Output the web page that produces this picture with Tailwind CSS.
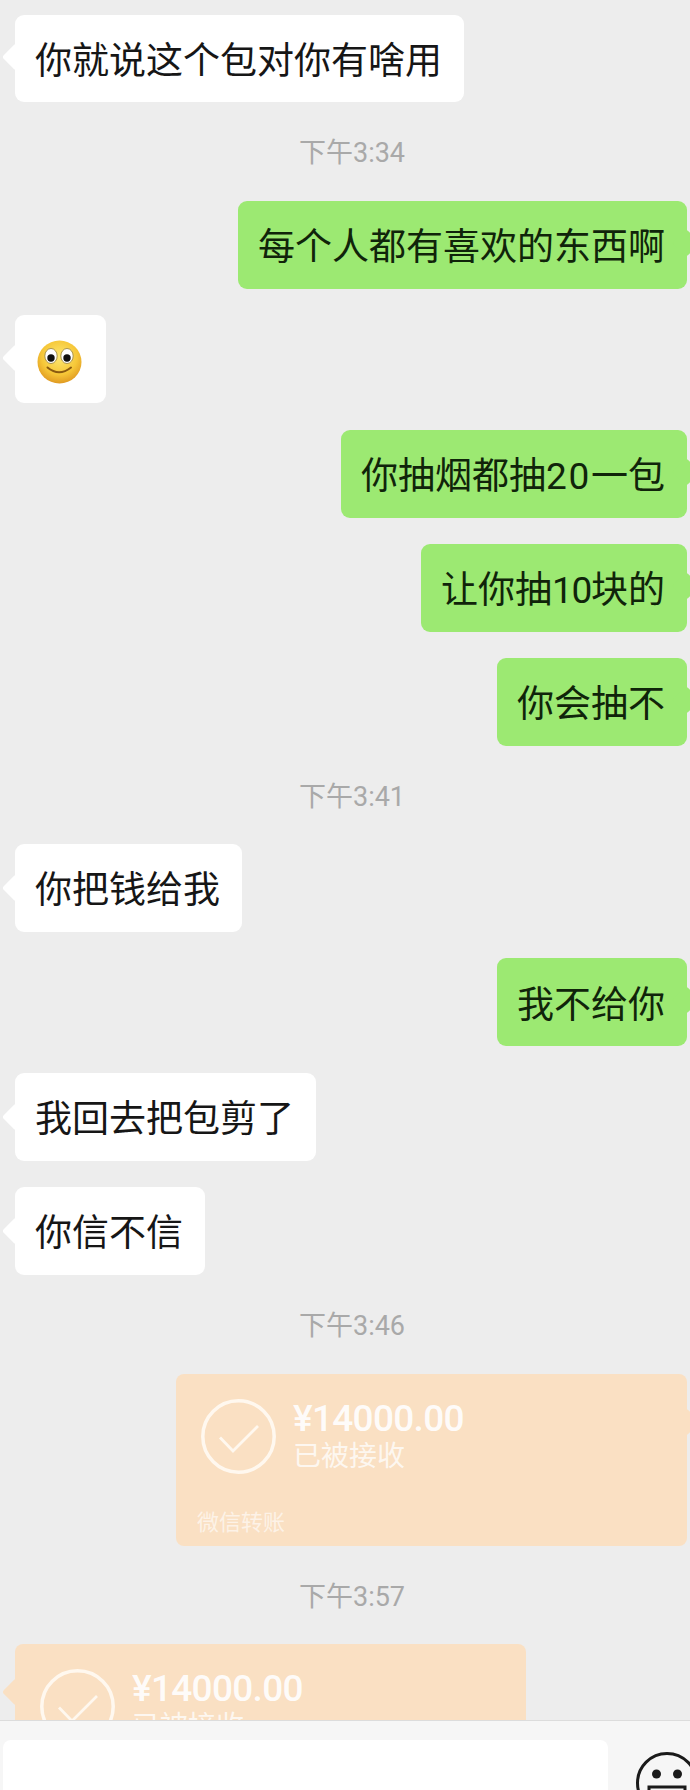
<!DOCTYPE html>
<html lang="zh-CN">
<head>
  <meta charset="UTF-8">
  <meta name="viewport" content="width=device-width, initial-scale=1">
  <title>聊天记录</title>
  <script src="https://cdn.jsdelivr.net/npm/@tailwindcss/browser@4"></script>
</head>
<body class="bg-[#ededed] w-[690px] h-[1790px] overflow-hidden font-[Roboto,'Noto_Sans_CJK_SC',sans-serif] text-[#161616]">

  <!-- 消息列表 -->
  <main class="h-[1720px] overflow-hidden pt-[15px] flex flex-col">
    <section class="flex flex-col gap-[26.3px]">
      <div class="relative self-start ml-[15px] h-[87px] pt-[6px] pl-[20px] pr-[22px] flex items-center bg-white rounded-[9px] text-[37px]">
        <span class="absolute -left-[9px] top-[32px] w-5 h-5 rotate-45 rounded-[3px] bg-white"></span>
        <span class="relative">你就说这个包对你有啥用</span>
      </div>
    </section>

    <div class="h-[99px] shrink-0 pl-[14px] pt-1 flex items-center justify-center text-[27px] text-[#a9a9a9]">下午3:34</div>

    <section class="flex flex-col gap-[26.3px]">
      <div class="relative self-end mr-[3px] h-[88px] pt-[6px] pl-[20px] pr-[22px] flex items-center bg-[#9ce972] rounded-[9px] text-[37px] text-[#10240a]">
        <span class="absolute -right-[9px] top-[32px] w-5 h-5 rotate-45 rounded-[3px] bg-[#9ce972]"></span>
        <span class="relative">每个人都有喜欢的东西啊</span>
      </div>

      <div class="relative self-start ml-[15px] h-[88px] w-[91px] flex items-center bg-white rounded-[9px]">
        <span class="absolute -left-[9px] top-[33px] w-5 h-5 rotate-45 rounded-[3px] bg-white"></span>
        <svg class="relative ml-[22px] mt-[5px]" width="45" height="44" viewBox="0 0 45 44">
          <defs>
            <radialGradient id="face" cx="50%" cy="38%" r="62%">
              <stop offset="0%" stop-color="#fde872"></stop>
              <stop offset="65%" stop-color="#f6c738"></stop>
              <stop offset="100%" stop-color="#e09a22"></stop>
            </radialGradient>
          </defs>
          <ellipse cx="22.5" cy="22" rx="22" ry="21.5" fill="url(#face)"></ellipse>
          <ellipse cx="14" cy="16" rx="6.2" ry="7.5" fill="#fff" stroke="#a8924a" stroke-width="1"></ellipse>
          <ellipse cx="30" cy="16" rx="6.2" ry="7.5" fill="#fff" stroke="#a8924a" stroke-width="1"></ellipse>
          <circle cx="14" cy="18" r="3.7" fill="#111"></circle>
          <circle cx="30" cy="18" r="3.7" fill="#111"></circle>
          <path d="M10.5 27.5 Q22 37 34 27.5" fill="none" stroke="#8a5a10" stroke-width="2" stroke-linecap="round"></path>
        </svg>
      </div>

      <div class="relative self-end mr-[3px] h-[88px] pt-[6px] pl-[20px] pr-[22px] flex items-center bg-[#9ce972] rounded-[9px] text-[37px] text-[#10240a]">
        <span class="absolute -right-[9px] top-[32px] w-5 h-5 rotate-45 rounded-[3px] bg-[#9ce972]"></span>
        <span class="relative">你抽烟都抽<span class="tracking-[1.7px]">20</span>一包</span>
      </div>

      <div class="relative self-end mr-[3px] h-[88px] pt-[6px] pl-[20px] pr-[22px] flex items-center bg-[#9ce972] rounded-[9px] text-[37px] text-[#10240a]">
        <span class="absolute -right-[9px] top-[32px] w-5 h-5 rotate-45 rounded-[3px] bg-[#9ce972]"></span>
        <span class="relative">让你抽<span class="tracking-[-1.3px]">10</span>块的</span>
      </div>

      <div class="relative self-end mr-[3px] h-[88px] pt-[6px] pl-[20px] pr-[22px] flex items-center bg-[#9ce972] rounded-[9px] text-[37px] text-[#10240a]">
        <span class="absolute -right-[9px] top-[32px] w-5 h-5 rotate-45 rounded-[3px] bg-[#9ce972]"></span>
        <span class="relative">你会抽不</span>
      </div>
    </section>

    <div class="h-[98px] shrink-0 pl-[14px] pt-1 flex items-center justify-center text-[27px] text-[#a9a9a9]">下午3:41</div>

    <section class="flex flex-col gap-[26.3px]">
      <div class="relative self-start ml-[15px] h-[88px] pt-[6px] pl-[20px] pr-[22px] flex items-center bg-white rounded-[9px] text-[37px]">
        <span class="absolute -left-[9px] top-[34px] w-5 h-5 rotate-45 rounded-[3px] bg-white"></span>
        <span class="relative">你把钱给我</span>
      </div>

      <div class="relative self-end mr-[3px] h-[88px] pt-[6px] pl-[20px] pr-[22px] flex items-center bg-[#9ce972] rounded-[9px] text-[37px] text-[#10240a]">
        <span class="absolute -right-[9px] top-[32px] w-5 h-5 rotate-45 rounded-[3px] bg-[#9ce972]"></span>
        <span class="relative">我不给你</span>
      </div>

      <div class="relative self-start ml-[15px] h-[88px] pt-[6px] pl-[20px] pr-[22px] flex items-center bg-white rounded-[9px] text-[37px]">
        <span class="absolute -left-[9px] top-[34px] w-5 h-5 rotate-45 rounded-[3px] bg-white"></span>
        <span class="relative">我回去把包剪了</span>
      </div>

      <div class="relative self-start ml-[15px] h-[88px] pt-[6px] pl-[20px] pr-[22px] flex items-center bg-white rounded-[9px] text-[37px]">
        <span class="absolute -left-[9px] top-[34px] w-5 h-5 rotate-45 rounded-[3px] bg-white"></span>
        <span class="relative">你信不信</span>
      </div>
    </section>

    <div class="h-[99px] shrink-0 pl-[14px] pt-1 flex items-center justify-center text-[27px] text-[#a9a9a9]">下午3:46</div>

    <!-- 转账卡片 -->
    <div class="relative self-end mr-[3px] w-[511px] h-[172px] shrink-0 bg-[#fae0c3] rounded-lg text-white">
      <span class="absolute -right-[9px] top-[38px] w-5 h-5 rotate-45 rounded-[3px] bg-[#fae0c3]"></span>
      <div class="relative flex gap-[17px] pl-[25px] pt-[25px]">
        <svg width="75" height="75" viewBox="0 0 75 75" fill="none" stroke="#fff8ef">
          <circle cx="37.5" cy="37.5" r="35.7" stroke-width="3.5"></circle>
          <path d="M19 38.5 L32 52 L57 27" stroke-width="2.8"></path>
        </svg>
        <div class="flex flex-col">
          <span class="text-[37px] leading-[40px] tracking-[-0.7px] font-medium opacity-90">¥14000.00</span>
          <span class="text-[28px] leading-[36px] opacity-75">已被接收</span>
        </div>
      </div>
      <span class="absolute left-[21px] bottom-[10px] text-[22px] leading-[26px] opacity-60">微信转账</span>
    </div>

    <div class="h-[98px] shrink-0 pl-[14px] pt-1 flex items-center justify-center text-[27px] text-[#a9a9a9]">下午3:57</div>

    <div class="relative self-start ml-[15px] w-[511px] h-[172px] shrink-0 bg-[#fae0c3] rounded-lg text-white">
      <span class="absolute -left-[9px] top-[38px] w-5 h-5 rotate-45 rounded-[3px] bg-[#fae0c3]"></span>
      <div class="relative flex gap-[17px] pl-[25px] pt-[25px]">
        <svg width="75" height="75" viewBox="0 0 75 75" fill="none" stroke="#fff8ef">
          <circle cx="37.5" cy="37.5" r="35.7" stroke-width="3.5"></circle>
          <path d="M19 38.5 L32 52 L57 27" stroke-width="2.8"></path>
        </svg>
        <div class="flex flex-col">
          <span class="text-[37px] leading-[40px] tracking-[-0.7px] font-medium opacity-90">¥14000.00</span>
          <span class="text-[28px] leading-[36px] opacity-75">已被接收</span>
        </div>
      </div>
    </div>
  </main>

  <!-- 输入栏 -->
  <footer class="h-[70px] overflow-hidden bg-[#f6f6f6] border-t border-[#dcdcdc] flex pl-[3px] pt-[19px]">
    <div class="w-[605px] h-[60px] shrink-0 bg-white rounded-lg"></div>
    <svg class="shrink-0 ml-[28px] mt-[12px]" width="62" height="62" viewBox="0 0 62 62" fill="none" stroke="#1a1a1a" stroke-width="3">
      <circle cx="31" cy="31" r="29.5"></circle>
      <circle cx="20.5" cy="22" r="4.5" fill="#1a1a1a" stroke="none"></circle>
      <circle cx="41.5" cy="22" r="4.5" fill="#1a1a1a" stroke="none"></circle>
      <path d="M13 35 H49 V40 Q49 56 31 56 Q13 56 13 40 Z"></path>
    </svg>
  </footer>

</body>
</html>
